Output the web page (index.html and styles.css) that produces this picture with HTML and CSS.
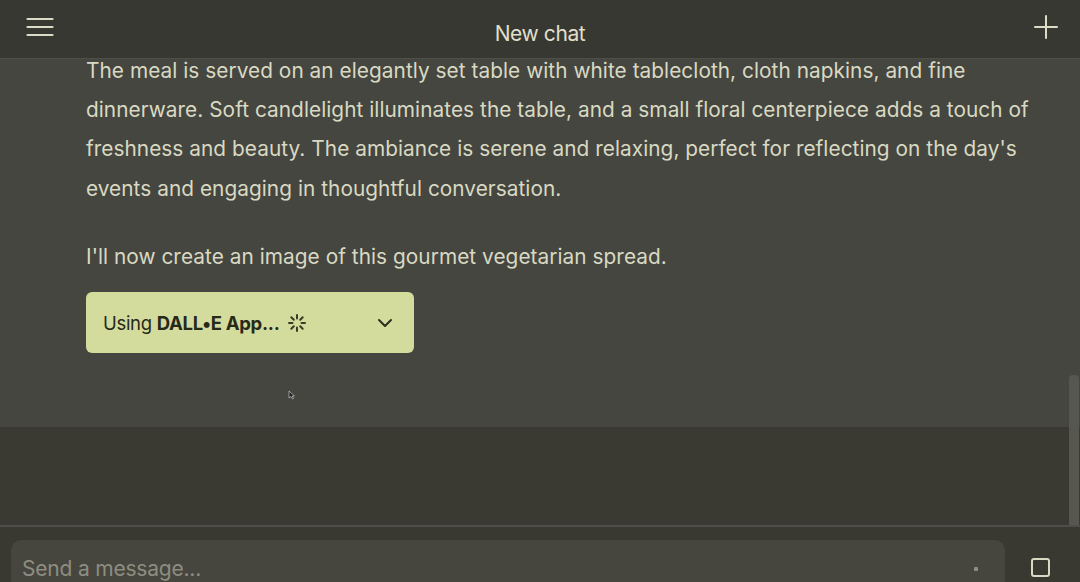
FILE: index.html
```html
<!DOCTYPE html>
<html>
<head>
<meta charset="utf-8">
<link rel="stylesheet" href="styles.css">
</head>
<body>
<div class="app">
  <header class="topbar">
    <button class="icon-btn left" aria-label="Menu">
      <svg width="28" height="20" viewBox="0 0 28 20"><g stroke="#dcdcc6" stroke-width="2.2" stroke-linecap="round"><line x1="1.5" y1="2" x2="26.5" y2="2"/><line x1="1.5" y1="10" x2="26.5" y2="10"/><line x1="1.5" y1="18" x2="26.5" y2="18"/></g></svg>
    </button>
    <h1 class="title">New chat</h1>
    <button class="icon-btn right" aria-label="New">
      <svg width="24" height="24" viewBox="0 0 24 24"><g stroke="#dcdcc6" stroke-width="2" stroke-linecap="round"><line x1="12" y1="1" x2="12" y2="23"/><line x1="1" y1="12" x2="23" y2="12"/></g></svg>
    </button>
  </header>
  <main class="thread">
    <div class="message">
      <p class="para first">The meal is served on an elegantly set table with white tablecloth, cloth napkins, and fine dinnerware. Soft candlelight illuminates the table, and a small floral centerpiece adds a touch of freshness and beauty. The ambiance is serene and relaxing, perfect for reflecting on the day's events and engaging in thoughtful conversation.</p>
      <p class="para second">I'll now create an image of this gourmet vegetarian spread.</p>
      <div class="plugin">
        <span class="plugin-label">Using <b>DALL•E App...</b></span>
        <svg class="spinner" width="20" height="20" viewBox="0 0 20 20"><g stroke="#3a3c26" stroke-width="2" stroke-linecap="round"><line x1="10" y1="2" x2="10" y2="5.5"/><line x1="10" y1="14.5" x2="10" y2="18"/><line x1="2" y1="10" x2="5.5" y2="10"/><line x1="14.5" y1="10" x2="18" y2="10"/><line x1="4.3" y1="4.3" x2="6.8" y2="6.8"/><line x1="13.2" y1="13.2" x2="15.7" y2="15.7"/><line x1="4.3" y1="15.7" x2="6.8" y2="13.2"/><line x1="13.2" y1="6.8" x2="15.7" y2="4.3"/></g></svg>
        <svg class="chevron" width="16" height="10" viewBox="0 0 16 10"><polyline points="2,2 8,8 14,2" fill="none" stroke="#2c2e1e" stroke-width="2" stroke-linecap="round" stroke-linejoin="round"/></svg>
      </div>
    </div>
    <svg class="cursor" width="8" height="10" viewBox="0 0 8 10"><path d="M1 1 L1 8 L3 6.5 L4.5 9 L5.5 8.5 L4.2 6 L6.5 6 Z" fill="#222" stroke="#ddd" stroke-width="0.6"/></svg>
  </main>
  <section class="spacer"></section>
  <footer class="composer">
    <div class="input-box">
      <span class="placeholder">Send a message...</span>
      <span class="dot"></span>
    </div>
    <span class="stop"></span>
  </footer>
  <div class="scrollbar"></div>
</div>
</body>
</html>
```
FILE: styles.css
```css
* { box-sizing: border-box; }
html, body {
  margin: 0;
  padding: 0;
  width: 1080px;
  height: 582px;
  overflow: hidden;
  background: #3a3a33;
  font-family: "Inter", "Noto Sans", sans-serif;
}
.app {
  position: relative;
  display: flex;
  flex-direction: column;
  height: 582px;
}
.topbar {
  height: 59px;
  flex: none;
  background: #383832;
  border-bottom: 1px solid #4e4f47;
  display: grid;
  grid-template-columns: 1fr auto 1fr;
  align-items: center;
  padding: 0 22px 0 26px;
  position: relative;
  z-index: 2;
}
.icon-btn {
  background: none;
  border: 0;
  padding: 0;
  display: flex;
  margin-top: -4px;
}
.icon-btn.right { justify-self: end; }
.title {
  margin: 0;
  font-size: 21px;
  font-weight: 400;
  color: #e0dfca;
  letter-spacing: -0.4px;
  margin-top: 8px;
  margin-right: 4px;
}
.thread {
  height: 368px;
  flex: none;
  background: #45463f;
  overflow: hidden;
  position: relative;
}
.message {
  padding-left: 86px;
  margin-top: -8px;
}
.para {
  margin: 0;
  color: #d9d9c3;
  font-size: 20.8px;
  line-height: 39.2px;
  width: 965px;
  letter-spacing: 0.05px;
}
.para.second {
  margin-top: 29px;
}
.plugin {
  margin-top: 16px;
  width: 328px;
  height: 61px;
  background: #d3dc9d;
  border-radius: 6px;
  display: flex;
  align-items: center;
  padding: 0 21px 0 17px;
}
.plugin-label {
  font-size: 18.5px;
  color: #272a19;
  letter-spacing: -0.3px;
}
.plugin-label b { font-weight: 700; }
.spinner {
  margin-left: 7px;
}
.chevron {
  margin-left: auto;
}
.cursor {
  position: absolute;
  left: 288px;
  top: 331px;
}
.spacer {
  height: 100px;
  flex: none;
  background: #3a3a32;
  border-bottom: 2px solid #4e4f48;
}
.composer {
  flex: 1;
  background: #393932;
  display: flex;
  align-items: flex-start;
  padding: 13px 0 0 11px;
}
.input-box {
  width: 994px;
  height: 60px;
  background: #46463f;
  border-radius: 10px;
  display: flex;
  align-items: flex-start;
  padding: 16px 0 0 11px;
  position: relative;
}
.placeholder {
  font-size: 21px;
  color: #8d8d80;
  letter-spacing: -0.2px;
}
.dot {
  position: absolute;
  left: 963px;
  top: 27px;
  width: 4px;
  height: 4px;
  background: #8e8e86;
  border-radius: 1px;
}
.stop {
  margin-left: 26px;
  margin-top: 18px;
  width: 19px;
  height: 19px;
  border: 2px solid #dad9c4;
  border-radius: 3px;
}
.scrollbar {
  position: absolute;
  left: 1069px;
  top: 375px;
  width: 10px;
  height: 150px;
  background: #56574f;
  border-radius: 4px 4px 0 0;
}
```
